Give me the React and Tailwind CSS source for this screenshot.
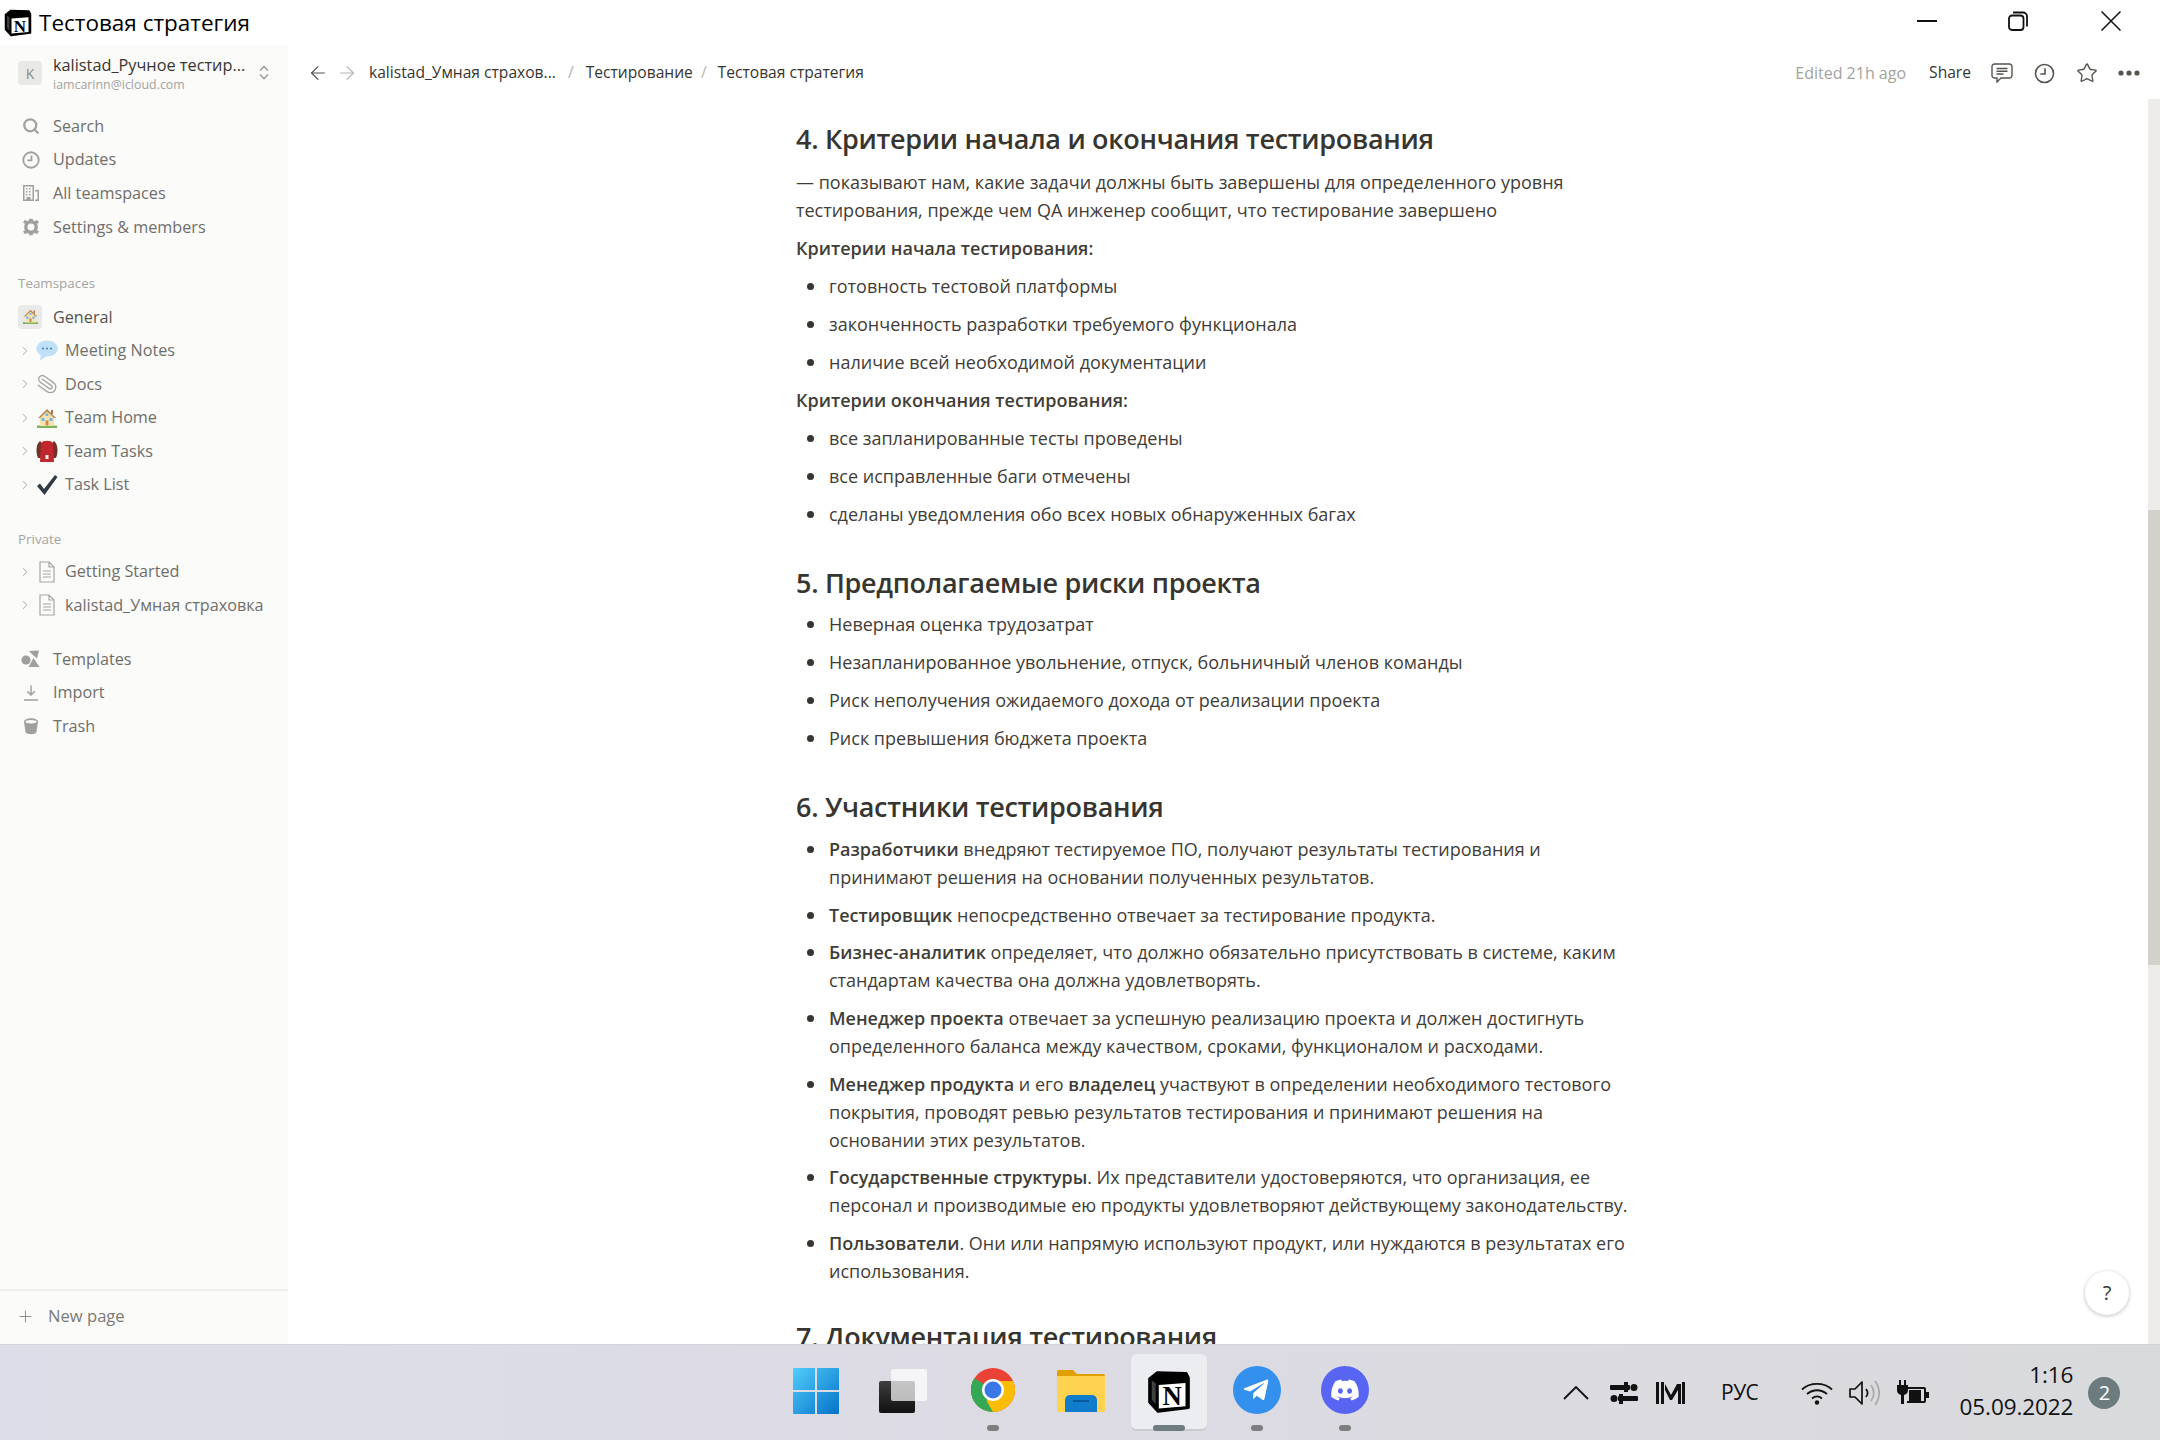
import React from 'react';
import { Search, Plus, ArrowLeft, ArrowRight, Star, Paperclip, ChevronRight } from 'lucide-react';
import { FaTelegramPlane } from 'react-icons/fa';
import { FaDiscord } from 'react-icons/fa6';

const font = { fontFamily: '"Open Sans", "Noto Sans", sans-serif' };

function NotionLogo({ size = 28 }) {
  return (
    <svg width={size} height={size} viewBox="0 0 28 28">
      <path d="M1.5 5.500 L6.500 1.500 L25 2 L26.500 5 V24 L7 26.500 L1.500 20.500 Z" fill="#000" stroke="#000" strokeWidth="1.500" strokeLinejoin="round" />
      <path d="M7.500 9.500 L24.500 8.300 V23 L7.500 24.500 Z" fill="#fff" />
      <path d="M3 6.500 L5.500 8.500 V21.500 L3 19 Z" fill="#fff" fillOpacity="0.25" />
      <text x="16" y="22.500" textAnchor="middle" fontFamily="'Liberation Serif', serif" fontWeight="700" fontSize="17" fill="#000">N</text>
    </svg>
  );
}

function Clock({ className = 'w-5 h-5', color = '#91918e', sw = 2 }) {
  return (
    <svg viewBox="0 0 20 20" className={className} fill="none" stroke={color} strokeWidth={sw}>
      <circle cx="10" cy="10" r="8.600" />
      <path d="M10.500 5v5.500H6" />
    </svg>
  );
}

function Building() {
  return (
    <svg viewBox="0 0 18 18" className="w-[18px] h-[18px]" fill="#a0a09c">
      <path fillRule="evenodd" d="M1 1h11v16H1zM2.500 2.500v13h8v-13zM13 6h4v11h-4v-1.500h2.500v-8H13z" />
      <path d="M4 4h1.500v1.500H4zM7 4h1.500v1.500H7zM4 7h1.500v1.500H4zM7 7h1.500v1.500H7zM4 10h1.500v1.500H4zM7 10h1.500v1.500H7zM4.500 13h4v3h-4z" />
    </svg>
  );
}

function Gear() {
  return (
    <svg viewBox="0 0 18 18" className="w-[18px] h-[18px]">
      <circle cx="9" cy="9" r="5.200" fill="none" stroke="#a0a09c" strokeWidth="3.400" />
      <path d="M7.300 .7h3.400l.4 3H6.900zM7.300 17.300h3.400l.4-3H6.900zM1 4.800l1.700-2.900 2.800 1.200-1.800 2.900zM17 13.200l-1.700 2.900-2.800-1.200 1.800-2.900zM1 13.200l1.700 2.900 2.800-1.200-1.800-2.900zM17 4.800l-1.700-2.900-2.800 1.200 1.800 2.900z" fill="#a0a09c" />
    </svg>
  );
}

function Templates() {
  return (
    <svg viewBox="0 0 20 18" className="w-[20px] h-[18px]" fill="#a0a09c">
      <circle cx="5" cy="10" r="4.600" />
      <path d="M8 1l10-.5-2 8-3-2.500zM12.500 8l6 9h-11z" />
    </svg>
  );
}

function ImportIcon() {
  return (
    <svg viewBox="0 0 18 18" className="w-[18px] h-[18px]" fill="none" stroke="#a0a09c" strokeWidth="1.500">
      <path d="M9 1.500v9M5.200 7.200L9 11l3.800-3.800M2 16h14" />
    </svg>
  );
}

function Trash() {
  return (
    <svg viewBox="0 0 18 18" className="w-[18px] h-[18px]">
      <path d="M2 5c0-5 14-5 14 0l-1.500 10c-.5 3-10.500 3-11 0z" fill="#a0a09c" />
      <ellipse cx="9" cy="4.800" rx="5.500" ry="1.700" fill="#fbfbfa" />
    </svg>
  );
}

function HouseEmoji({ size = 20 }) {
  return (
    <svg viewBox="0 0 20 20" width={size} height={size}>
      <rect x="0" y="17.500" width="20" height="2.500" fill="#7cb45a" />
      <rect x="3" y="8" width="14" height="10" fill="#f6e3b4" />
      <path d="M1 10L10 1l9 9H17L10 4 3 10z" fill="#b9854f" />
      <path d="M5 8l5-4.500L15 8z" fill="#f0d9a0" />
      <rect x="14" y="2" width="2" height="4" fill="#a8754a" />
      <rect x="4.500" y="10" width="3" height="3" fill="#6cb4e4" />
      <rect x="12.500" y="10" width="3" height="3" fill="#6cb4e4" />
      <rect x="8.800" y="5.500" width="2.400" height="2.400" fill="#6cb4e4" />
      <rect x="8.600" y="12.500" width="2.800" height="5" fill="#c98a4b" />
    </svg>
  );
}

function Balloon() {
  return (
    <svg viewBox="0 0 22 21" className="w-[22px] h-[21px]">
      <ellipse cx="11" cy="8.500" rx="10.800" ry="8" fill="#bfe0f7" />
      <path d="M5 14l-1 6.500 6.500-4z" fill="#bfe0f7" />
      <circle cx="7" cy="8.500" r="1" fill="#3b7fb8" />
      <circle cx="11" cy="8.500" r="1" fill="#3b7fb8" />
      <circle cx="15" cy="8.500" r="1" fill="#3b7fb8" />
    </svg>
  );
}

function Backpack() {
  return (
    <svg viewBox="0 0 22 22" className="w-[22px] h-[22px]">
      <path d="M4 1C0 4-.5 12 2 18h3V2z M18 1c4 3 4.500 11 2 17h-3V2z" fill="#6e3426" />
      <path d="M5 3C7 0 15 0 17 3l1 19H4z" fill="#c1272d" />
      <rect x="9.500" y="15" width="3" height="4" fill="#f2f2f2" />
    </svg>
  );
}

function CheckEmoji() {
  return (
    <svg viewBox="0 0 22 22" className="w-[22px] h-[22px]">
      <path d="M1 12l3-2.500 4 5.500L19 1l2.500 2L8.500 21z" fill="#2f3a44" />
    </svg>
  );
}

function DocIcon() {
  return (
    <svg viewBox="0 0 18 22" className="w-[18px] h-[22px]" fill="none" stroke="#a5a5a1" strokeWidth="1.200">
      <path d="M2 1h9l5 5v15H2zM11 1v5h5" />
      <path d="M5 10h8M5 13h8M5 16h8" />
    </svg>
  );
}

const topNav = [
  { label: 'Search', icon: <Search size={18} strokeWidth={3} color="#a0a09c" /> },
  { label: 'Updates', icon: <Clock className="w-[18px] h-[18px]" color="#a0a09c" /> },
  { label: 'All teamspaces', icon: <Building /> },
  { label: 'Settings & members', icon: <Gear /> },
];

const teamPages = [
  { label: 'Meeting Notes', icon: <Balloon /> },
  { label: 'Docs', icon: <Paperclip size={22} strokeWidth={1.500} color="#a5a5a1" className="rotate-[-10deg] scale-x-[-1]" /> },
  { label: 'Team Home', icon: <HouseEmoji /> },
  { label: 'Team Tasks', icon: <Backpack /> },
  { label: 'Task List', icon: <CheckEmoji /> },
];

const privatePages = ['Getting Started', 'kalistad_Умная страховка'];

const bottomNav = [
  { label: 'Templates', icon: <Templates /> },
  { label: 'Import', icon: <ImportIcon /> },
  { label: 'Trash', icon: <Trash /> },
];

function NavRow({ label, icon, h = 'h-[33.7px]' }) {
  return (
    <div className={`${h} flex items-center pl-[21px]`}>
      <span className="w-[20px] flex justify-center">{icon}</span>
      <span className="ml-3 text-[16.200px] text-[#6f6e69]">{label}</span>
    </div>
  );
}

function PageRow({ label, icon }) {
  return (
    <div className="h-[33.5px] flex items-center pl-[18px]">
      <ChevronRight size={14} strokeWidth={1.600} color="#a0a09c" />
      <span className="w-[24px] ml-[3px] flex justify-center">{icon}</span>
      <span className="ml-[6px] text-[16.200px] text-[#6f6e69] whitespace-nowrap">{label}</span>
    </div>
  );
}

function Sidebar() {
  return (
    <aside className="w-[288px] shrink-0 bg-[#fbfbfa] flex flex-col">
      <div className="h-[64px] pt-[16px] pl-[18px] flex items-start">
        <div className="w-6 h-6 rounded bg-[#e9e9e7] flex items-center justify-center text-[14px] text-[#8a8985]">K</div>
        <div className="ml-[11px] -mt-[6px] w-[206px]">
          <div className="text-[16.300px] leading-[20px] text-[#37352f] whitespace-nowrap">kalistad_Ручное тестир...</div>
          <div className="text-[12.400px] leading-[19px] text-[#a3a29e]">iamcarinn@icloud.com</div>
        </div>
        <svg viewBox="0 0 10 15" className="w-[10px] h-[15px] mt-[4px]" fill="none" stroke="#a0a09c" strokeWidth="1.600">
          <path d="M1 5.500L5 1.500l4 4M1 9.500l4 4 4-4" />
        </svg>
      </div>
      <div>
        {topNav.map(n => <NavRow key={n.label} {...n} />)}
      </div>
      <div className="mt-[30px] pl-[18px] text-[13.400px] leading-[18px] text-[#a5a4a0]">Teamspaces</div>
      <div className="mt-[8px] h-[34px] pl-[18px] flex items-center">
        <span className="w-6 h-6 rounded bg-[#e9e9e7] flex items-center justify-center"><HouseEmoji size={15} /></span>
        <span className="ml-[11px] text-[16.200px] text-[#55534e]">General</span>
      </div>
      {teamPages.map(p => <PageRow key={p.label} {...p} />)}
      <div className="mt-[29px] pl-[18px] text-[13.400px] leading-[18px] text-[#a5a4a0]">Private</div>
      <div className="mt-[6.500px]">
        {privatePages.map(p => <PageRow key={p} label={p} icon={<DocIcon />} />)}
      </div>
      <div className="mt-[21px]">
        {bottomNav.map(n => <NavRow key={n.label} {...n} h="h-[33.2px]" />)}
      </div>
      <div className="mt-auto h-[55px] pb-[3px] border-t-2 border-[#eeeeec] flex items-center pl-[16px]">
        <Plus size={19} strokeWidth={1.300} color="#8f8e8a" />
        <span className="ml-[13px] text-[16.600px] text-[#7a7975]">New page</span>
      </div>
    </aside>
  );
}

function Header() {
  return (
    <div className="h-[54px] shrink-0 flex items-center pt-[2px] pl-[19px] pr-[20px] text-[15.600px] text-[#37352f]">
      <ArrowLeft size={22} strokeWidth={1.300} color="#55534e" />
      <ArrowRight size={22} strokeWidth={1.300} color="#b4b4b0" className="ml-[7px]" />
      <span className="ml-[11px] w-[190px] whitespace-nowrap">kalistad_Умная страхов...</span>
      <span className="ml-[9px] text-[#b4b4b0]">/</span>
      <span className="ml-[12px] whitespace-nowrap">Тестирование</span>
      <span className="ml-[8px] text-[#b4b4b0]">/</span>
      <span className="ml-[11px] whitespace-nowrap">Тестовая стратегия</span>
      <span className="ml-auto text-[16px] text-[#a3a29e] whitespace-nowrap">Edited 21h ago</span>
      <span className="ml-[23px] whitespace-nowrap">Share</span>
      <svg viewBox="0 0 22 20" className="w-[22px] h-[20px] ml-[20px]" fill="none" stroke="#55534e" strokeWidth="1.400">
        <path d="M3.500 1h15a2.500 2.500 0 0 1 2.500 2.500v9a2.500 2.500 0 0 1-2.500 2.500H10l-4 4v-4H3.500A2.500 2.500 0 0 1 1 12.500v-9A2.500 2.500 0 0 1 3.500 1z" />
        <path d="M5.500 5.500h11M5.500 8.300h11M5.500 11h7" />
      </svg>
      <span className="ml-[21px]"><Clock className="w-[21px] h-[21px]" color="#55534e" sw={1.500} /></span>
      <Star size={22} strokeWidth={1.500} color="#55534e" className="ml-[21px]" />
      <svg viewBox="0 0 22 6" className="w-[22px] h-[6px] ml-[20px]" fill="#55534e">
        <circle cx="3" cy="3" r="2.600" /><circle cx="11" cy="3" r="2.600" /><circle cx="19" cy="3" r="2.600" />
      </svg>
    </div>
  );
}

function Li({ children, tight }) {
  return (
    <li className={`flex ${tight ? 'pb-[9.700px]' : 'pb-[10px]'}`}>
      <span className="w-[33px] shrink-0 flex justify-center pt-[11px] pr-[5px]">
        <span className="w-[7px] h-[7px] rounded-full bg-[#37352f]" />
      </span>
      <span>{children}</span>
    </li>
  );
}

function H({ children, className = '' }) {
  return <h2 className={`text-[27px] leading-[34px] font-semibold tracking-[-0.3px] text-[#37352f] whitespace-nowrap ${className}`}>{children}</h2>;
}

function Article() {
  return (
    <article className="pl-[508px] w-[1400px] text-[18px] leading-[28px] text-[#3f3d38]">
      <H>4. Критерии начала и окончания тестирования</H>
      <p className="mt-[12px]">— показывают нам, какие задачи должны быть завершены для определенного уровня<br />тестирования, прежде чем QA инженер сообщит, что тестирование завершено</p>
      <p className="mt-[10px] font-semibold">Критерии начала тестирования:</p>
      <ul className="mt-[9.500px]">
        <Li>готовность тестовой платформы</Li>
        <Li>законченность разработки требуемого функционала</Li>
        <Li>наличие всей необходимой документации</Li>
      </ul>
      <p className="font-semibold">Критерии окончания тестирования:</p>
      <ul className="mt-[10px]">
        <Li>все запланированные тесты проведены</Li>
        <Li>все исправленные баги отмечены</Li>
        <Li>сделаны уведомления обо всех новых обнаруженных багах</Li>
      </ul>
      <H className="mt-[28.500px]">5. Предполагаемые риски проекта</H>
      <ul className="mt-[10px]">
        <Li>Неверная оценка трудозатрат</Li>
        <Li>Незапланированное увольнение, отпуск, больничный членов команды</Li>
        <Li>Риск неполучения ожидаемого дохода от реализации проекта</Li>
        <Li>Риск превышения бюджета проекта</Li>
      </ul>
      <H className="mt-[28px]">6. Участники тестирования</H>
      <ul className="mt-[11px]">
        <Li tight><b className="font-semibold">Разработчики</b> внедряют тестируемое ПО, получают результаты тестирования и<br />принимают решения на основании полученных результатов.</Li>
        <Li tight><b className="font-semibold">Тестировщик</b> непосредственно отвечает за тестирование продукта.</Li>
        <Li tight><b className="font-semibold">Бизнес-аналитик</b> определяет, что должно обязательно присутствовать в системе, каким<br />стандартам качества она должна удовлетворять.</Li>
        <Li tight><b className="font-semibold">Менеджер проекта</b> отвечает за успешную реализацию проекта и должен достигнуть<br />определенного баланса между качеством, сроками, функционалом и расходами.</Li>
        <Li tight><b className="font-semibold">Менеджер продукта</b> и его <b className="font-semibold">владелец</b> участвуют в определении необходимого тестового<br />покрытия, проводят ревью результатов тестирования и принимают решения на<br />основании этих результатов.</Li>
        <Li tight><b className="font-semibold">Государственные структуры</b>. Их представители удостоверяются, что организация, ее<br />персонал и производимые ею продукты удовлетворяют действующему законодательству.</Li>
        <Li tight><b className="font-semibold">Пользователи</b>. Они или напрямую используют продукт, или нуждаются в результатах его<br />использования.</Li>
      </ul>
      <H className="mt-[25px]">7. Документация тестирования</H>
    </article>
  );
}

function Chrome() {
  return (
    <svg viewBox="0 0 44 44" className="w-[44px] h-[44px]">
      <defs><clipPath id="c"><circle cx="22" cy="22" r="22" /></clipPath></defs>
      <g clipPath="url(#c)">
        <rect width="44" height="44" fill="#ea4335" />
        <path d="M0 8L22 22 14 44H0z" fill="#34a853" />
        <path d="M44 13H22L12 44H44z" fill="#fbbc05" />
        <path d="M0 8l15 24 7 12H10L0 30z" fill="#34a853" />
      </g>
      <circle cx="22" cy="22" r="11" fill="#fff" />
      <circle cx="22" cy="22" r="8.500" fill="#3b78e7" />
    </svg>
  );
}

function WinLogo() {
  return (
    <svg viewBox="0 0 46 46" className="w-[46px] h-[46px]">
      <defs>
        <linearGradient id="w" x1="0" y1="0" x2="1" y2="1">
          <stop offset="0" stopColor="#52cdfc" /><stop offset="1" stopColor="#0472c8" />
        </linearGradient>
      </defs>
      <path d="M1 0H22V22H0V1a1 1 0 0 1 1-1zM24 0H45a1 1 0 0 1 1 1V22H24zM0 24H22V46H1a1 1 0 0 1-1-1zM24 24H46V45a1 1 0 0 1-1 1H24z" fill="url(#w)" />
    </svg>
  );
}

function TaskButton({ children, dot, className = '' }) {
  return (
    <div className={`relative flex items-center justify-center h-[96px] ${className}`}>
      {children}
      {dot && <span className="absolute bottom-[10px] w-3 h-[6px] rounded-full bg-[#7c7e80]" />}
    </div>
  );
}

function Taskbar() {
  return (
    <div className="h-[96px] shrink-0 flex items-center bg-gradient-to-r from-[#dcdde8] via-[#dcdbe4] to-[#d9dadc] border-t border-[#d4d4d8]">
      <div className="ml-[793px] flex items-center">
        <TaskButton className="w-[46px]"><div className="-mt-[3px]"><WinLogo /></div></TaskButton>
        <TaskButton className="w-[48px] ml-[40px]">
          <div className="relative w-[48px] h-[44px] -mt-[4px]">
            <div className="absolute left-0 bottom-0 w-9 h-8 rounded-[2px] bg-gradient-to-b from-[#3f3f3f] to-[#111]" />
            <div className="absolute right-0 top-0 w-9 h-8 rounded-[2px] bg-white/70" />
          </div>
        </TaskButton>
        <TaskButton dot className="w-[44px] ml-[44px]"><div className="-mt-[6px]"><Chrome /></div></TaskButton>
        <TaskButton className="w-[48px] ml-[42px]">
          <svg viewBox="0 0 48 42" className="w-[48px] h-[42px] -mt-[3px]">
            <path d="M0 2a2 2 0 0 1 2-2h14l4 4h26a2 2 0 0 1 2 2v6H0z" fill="#e0a100" />
            <path d="M0 6h48v34a2 2 0 0 1-2 2H2a2 2 0 0 1-2-2z" fill="#ffd250" />
            <path d="M8 42V30a5 5 0 0 1 5-5h22a5 5 0 0 1 5 5v12z" fill="#0f7dcb" />
            <rect x="16" y="30" width="16" height="2" fill="#0a5a98" />
          </svg>
        </TaskButton>
        <TaskButton className="w-[76px] ml-[26px]">
          <div className="w-[76px] h-[77px] rounded-[6px] bg-[#ecedf0] border-b-2 border-[#c9cace] flex items-center justify-center">
            <NotionLogo size={44} />
          </div>
          <span className="absolute bottom-[10px] w-8 h-[6px] rounded-full bg-[#6f7d80]" />
        </TaskButton>
        <TaskButton dot className="w-[48px] ml-[26px]">
          <div className="w-12 h-12 -mt-[5px] rounded-full bg-[#3390ec] flex items-center justify-center">
            <FaTelegramPlane size={28} color="#fff" className="-ml-[3px]" />
          </div>
        </TaskButton>
        <TaskButton dot className="w-[48px] ml-[40px]">
          <div className="w-12 h-12 -mt-[5px] rounded-full bg-[#5865f2] flex items-center justify-center">
            <FaDiscord size={30} color="#fff" />
          </div>
        </TaskButton>
      </div>

      <div className="ml-[194px] flex items-center text-[#111]">
        <svg viewBox="0 0 26 14" className="w-[26px] h-[14px]" fill="none" stroke="#111" strokeWidth="1.800"><path d="M1 13L13 1l12 12" /></svg>
        <svg viewBox="0 0 28 22" className="w-[28px] h-[22px] ml-[21px]" fill="#111">
          <rect x="0" y="3" width="20" height="5" rx="1" /><circle cx="24" cy="5.500" r="3.500" />
          <rect x="8" y="14" width="20" height="5" rx="1" /><circle cx="4" cy="16.500" r="3.500" />
          <rect x="14" y="0" width="4" height="10" /><rect x="9" y="12" width="4" height="10" />
        </svg>
        <svg viewBox="0 0 29 22" className="w-[29px] h-[22px] ml-[18px]" fill="#111">
          <path d="M0 0h3v22H0zM5 0h3v22H5zM26 0h3v22h-3zM9 2l6 11 6-11h4v20h-3V8l-6 10h-2L9 8z" />
        </svg>
        <span className="ml-[36px] text-[21px] tracking-[-0.5px] text-[#111]">РУС</span>
        <svg viewBox="0 0 32 24" className="w-[32px] h-[24px] ml-[43px]" fill="none" stroke="#111" strokeWidth="1.800">
          <path d="M1 8.500C9 1 23 1 31 8.500M6 13c6-5 14-5 20 0M11 17.500c3-2.500 7-2.500 10 0" />
          <circle cx="16" cy="21.500" r="2.200" fill="#111" stroke="none" />
        </svg>
        <svg viewBox="0 0 32 26" className="w-[32px] h-[26px] ml-[16px]" fill="none" strokeWidth="1.700">
          <path d="M1 9h5l7-7v22l-7-7H1z" stroke="#111" strokeLinejoin="round" />
          <path d="M17 9c2 2.500 2 5.500 0 8" stroke="#111" />
          <path d="M22 5c3.500 5 3.500 11 0 16M26 1c5.500 7 5.500 17 0 24" stroke="#a8a8a8" />
        </svg>
        <svg viewBox="0 0 34 26" className="w-[34px] h-[26px] ml-[15px]" fill="#111">
          <path d="M3 0h2v5H3zM8 0h2v5H8zM1 5h11v5a5 5 0 0 1-4 5v9H5v-9a5 5 0 0 1-4-5z" />
          <path d="M11 7h17a2 2 0 0 1 2 2v3h3v6h-3v3a2 2 0 0 1-2 2H11v-2h17V9H11z" />
          <rect x="13" y="10" width="12" height="11" />
        </svg>
      </div>
      <div className="ml-[15px] -mt-[3px] w-[128px] text-right text-[22.500px] leading-[32px] text-[#111] tracking-[-0.1px] whitespace-nowrap">
        <div>1:16</div>
        <div>05.09.2022</div>
      </div>
      <div className="ml-[15px] w-8 h-8 rounded-full bg-[#6b7b7e] flex items-center justify-center text-white text-[20px]">2</div>
    </div>
  );
}

export default function App() {
  return (
    <div className="w-[2160px] h-[1440px] overflow-hidden flex flex-col bg-white" style={font}>
      <div className="h-[45px] shrink-0 flex items-center pl-[4px] pr-[39px]">
        <NotionLogo />
        <span className="ml-[7px] mt-[1px] text-[22.500px] text-black whitespace-nowrap">Тестовая стратегия</span>
        <svg viewBox="0 0 20 20" className="ml-auto -mt-[3px] w-5 h-5"><rect y="9" width="20" height="2" fill="#111" /></svg>
        <svg viewBox="0 0 20 20" className="ml-[71px] -mt-[3px] w-5 h-5" fill="none" stroke="#111" strokeWidth="1.800">
          <rect x="1" y="4.500" width="14.500" height="14.500" rx="3" />
          <path d="M5 1.500h10a4 4 0 0 1 4 4v10" />
        </svg>
        <svg viewBox="0 0 20 20" className="ml-[73px] -mt-[3px] w-5 h-5" fill="none" stroke="#111" strokeWidth="1.500"><path d="M.5.5l19 19M19.500.5l-19 19" /></svg>
      </div>
      <div className="flex-1 min-h-0 flex">
        <Sidebar />
        <main className="relative flex-1 min-w-0 flex flex-col">
          <Header />
          <div className="flex-1 min-h-0 flex">
            <div className="flex-1 min-w-0 overflow-hidden pt-[23px]">
              <Article />
            </div>
            <div className="w-[12px] shrink-0 bg-[#edece9]">
              <div className="mt-[411px] h-[455px] bg-[#d3d1cb]" />
            </div>
          </div>
          {/* help button sits over the page */}
          <div className="absolute right-[31px] bottom-[29px] w-[44px] h-[44px] rounded-full bg-white shadow-[0_1px_4px_rgba(0,0,0,0.25)] flex items-center justify-center text-[20px] text-[#37352f]">?</div>
        </main>
      </div>
      <Taskbar />
    </div>
  );
}
